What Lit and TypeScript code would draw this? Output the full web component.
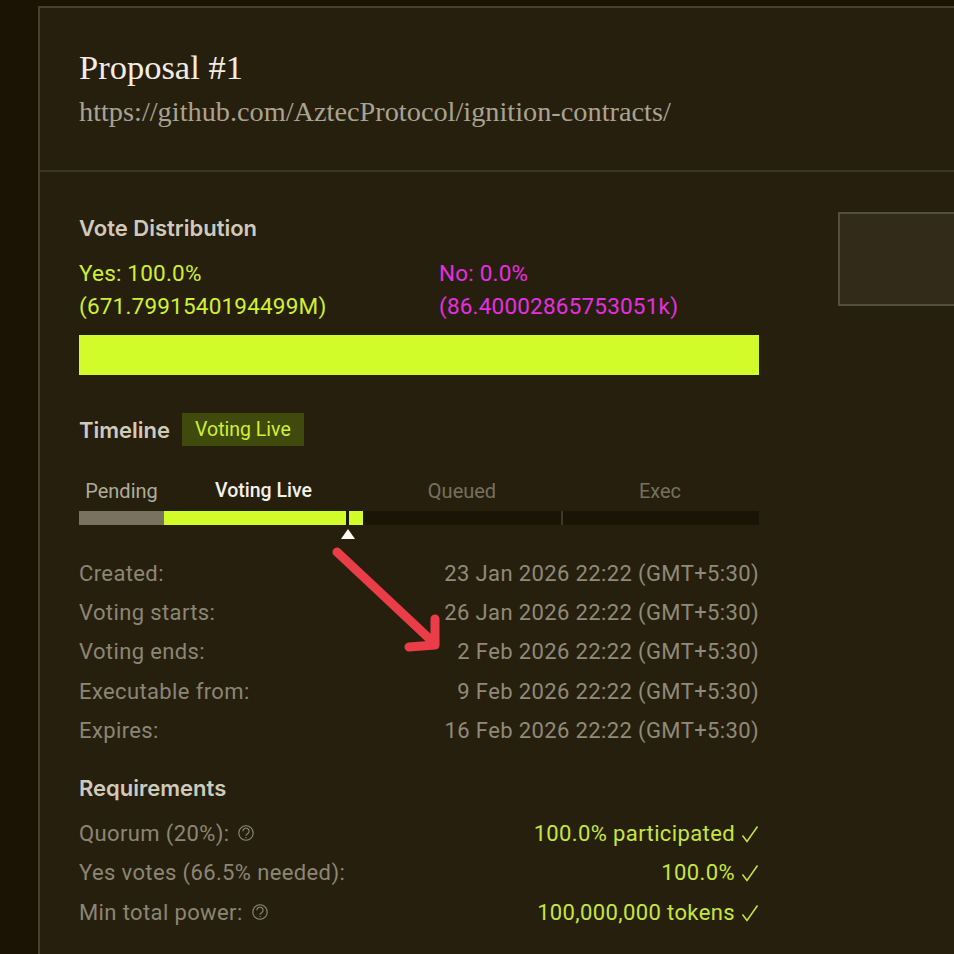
import { LitElement, html, css, svg } from "lit";
import { customElement } from "lit/decorators.js";

const dates = [
  ["Created:", "23 Jan 2026 22:22 (GMT+5:30)"],
  ["Voting starts:", "26 Jan 2026 22:22 (GMT+5:30)"],
  ["Voting ends:", "2 Feb 2026 22:22 (GMT+5:30)"],
  ["Executable from:", "9 Feb 2026 22:22 (GMT+5:30)"],
  ["Expires:", "16 Feb 2026 22:22 (GMT+5:30)"],
];

const requirements = [
  { label: "Quorum (20%):", help: true, value: "100.0% participated" },
  { label: "Yes votes (66.5% needed):", help: false, value: "100.0%" },
  { label: "Min total power:", help: true, value: "100,000,000 tokens" },
];

const stages = [
  { label: "Pending", width: 85, cls: "done" },
  { label: "Voting Live", width: 199, cls: "live" },
  { label: "Queued", width: 198, cls: "todo" },
  { label: "Exec", width: 198, cls: "todo" },
];

const helpIcon = svg`<circle cx="8" cy="8" r="7.2" fill="none" stroke="currentColor" stroke-width="1.1"/>
  <path d="M4.9 6.2a3.1 3.1 0 1 1 4.7 2.6c-1 .6-1.6 1-1.6 2" fill="none" stroke="currentColor" stroke-width="1.1"/>
  <circle cx="8" cy="12.6" r=".7" fill="currentColor"/>`;

const checkIcon = svg`<path d="M1.5 10.5 6 16.5 16.5 1.5" fill="none" stroke="currentColor" stroke-width="1.5"/>`;

@customElement("app-root")
export class AppRoot extends LitElement {
  static styles = css`
    :host {
      display: block;
      height: 954px;
      overflow: hidden;
      background: #1b1404;
      font-family: Roboto, "Liberation Sans", sans-serif;
      position: relative;
    }
    .panel {
      margin: 6px 0 0 38px;
      height: 948px;
      box-sizing: border-box;
      background: #271f0e;
      border: solid #48412f;
      border-width: 2px 0 0 2px;
    }
    header {
      height: 164px;
      box-sizing: border-box;
      padding: 39px 0 0 39px;
      border-bottom: 2px solid #3b3524;
    }
    h1 {
      margin: 0;
      font: 400 34.5px/40px "Liberation Serif", serif;
      color: #f1ede2;
    }
    .url {
      margin-top: 9px;
      font: 400 28.3px/32px "Liberation Serif", serif;
      color: #a8a392;
    }
    .content {
      display: flex;
      align-items: flex-start;
      padding: 0 0 0 39px;
    }
    .main {
      width: 680px;
      flex: none;
    }
    aside {
      width: 200px;
      height: 94px;
      flex: none;
      box-sizing: border-box;
      margin: 40px 0 0 79px;
      background: #332b19;
      border: solid #544e3c;
      border-width: 2px 0 2px 2px;
    }
    h2 {
      margin: 0;
      font-family: Inter, sans-serif;
      font-size: 22px;
      line-height: 28px;
      font-weight: 600;
      color: #cfcabb;
    }
    .distribution {
      padding-top: 42px;
    }
    .votes {
      display: grid;
      grid-template-columns: 360px 1fr;
      margin-top: 15px;
      font-size: 22.5px;
      letter-spacing: 0.2px;
      line-height: 33px;
    }
    .yes {
      color: #d0f030;
    }
    .no {
      color: #e62fe0;
    }
    .vote-bar {
      height: 40px;
      margin-top: 12px;
      background: #d2fb2a;
    }
    .timeline-head {
      display: flex;
      align-items: center;
      gap: 12px;
      margin-top: 38px;
    }
    .badge {
      height: 33px;
      padding: 0 13px;
      display: flex;
      align-items: center;
      background: #414a0d;
      color: #d0f030;
      font: 400 19.5px Roboto, sans-serif;
    }
    .stages {
      display: flex;
      margin-top: 31px;
    }
    .stage {
      text-align: center;
      font: 400 20px/28px Roboto, sans-serif;
      color: #76705f;
    }
    .stage.done {
      color: #b0ab9b;
    }
    .stage.live {
      color: #f4f1e6;
      font-size: 19.5px;
      font-weight: 500;
    }
    .bar {
      display: flex;
      position: relative;
      height: 14px;
      margin-top: 6px;
      background: #1a1406;
    }
    .seg.done {
      background: #78725f;
    }
    .seg.live {
      background: #d2fb2a;
    }
    .seg.todo + .seg.todo {
      border-left: 2px solid #3d3829;
      box-sizing: border-box;
    }
    .now {
      position: absolute;
      left: 267px;
      top: 0;
      width: 3px;
      height: 14px;
      background: #1f1808;
    }
    .tick {
      position: absolute;
      left: 262px;
      top: 18px;
      width: 0;
      height: 0;
      border: solid transparent;
      border-width: 0 7px 10px;
      border-bottom-color: #fbf9f0;
    }
    .rows {
      margin-top: 28.5px;
    }
    .row {
      display: flex;
      justify-content: space-between;
      font-size: 22px;
      letter-spacing: 0.38px;
      line-height: 39.4px;
      color: #8b8675;
    }
    .row .value {
      color: #8f8a79;
    }
    h2.req {
      margin-top: 23.5px;
    }
    .req-rows {
      margin-top: 12px;
    }
    .req-rows .value {
      color: #c6e63c;
      display: flex;
      align-items: center;
      gap: 6px;
    }
    .label {
      display: flex;
      align-items: center;
      gap: 9px;
    }
    .help {
      width: 16px;
      height: 16px;
      color: #8f8a79;
      margin-top: -2px;
    }
    .check {
      width: 18px;
      height: 18px;
    }
    .arrow {
      position: absolute;
      left: 325px;
      top: 540px;
      width: 125px;
      height: 120px;
    }
  `;

  render() {
    return html`
      <div class="panel">
        <header>
          <h1>Proposal #1</h1>
          <div class="url">https://github.com/AztecProtocol/ignition-contracts/</div>
        </header>
        <div class="content">
          <div class="main">
            <section class="distribution">
              <h2>Vote Distribution</h2>
              <div class="votes">
                <div class="yes">Yes: 100.0%<br />(671.7991540194499M)</div>
                <div class="no">No: 0.0%<br />(86.40002865753051k)</div>
              </div>
              <div class="vote-bar"></div>
            </section>
            <section>
              <div class="timeline-head">
                <h2>Timeline</h2>
                <span class="badge">Voting Live</span>
              </div>
              <div class="stages">
                ${stages.map(
                  (s) => html`<div class="stage ${s.cls}" style="width:${s.width}px">${s.label}</div>`
                )}
              </div>
              <div class="bar">
                ${stages.map(
                  (s) => html`<div class="seg ${s.cls}" style="width:${s.width}px"></div>`
                )}
                <div class="now"></div>
                <div class="tick"></div>
              </div>
              <div class="rows">
                ${dates.map(
                  ([label, value]) => html`
                    <div class="row"><span>${label}</span><span class="value">${value}</span></div>
                  `
                )}
              </div>
            </section>
            <section>
              <h2 class="req">Requirements</h2>
              <div class="req-rows">
                ${requirements.map(
                  (r) => html`
                    <div class="row">
                      <span class="label">
                        ${r.label}
                        ${r.help ? html`<svg class="help" viewBox="0 0 16 16">${helpIcon}</svg>` : ""}
                      </span>
                      <span class="value">
                        ${r.value}
                        <svg class="check" viewBox="0 0 18 18">${checkIcon}</svg>
                      </span>
                    </div>
                  `
                )}
              </div>
            </section>
          </div>
          <aside></aside>
        </div>
      </div>
      <svg class="arrow" viewBox="0 0 125 120">
        <path
          d="M12 12 L109 103 M84 107 L110 105 L110 79"
          fill="none"
          stroke="#ea3d48"
          stroke-width="9"
          stroke-linecap="round"
          stroke-linejoin="round"
        />
      </svg>
    `;
  }
}
